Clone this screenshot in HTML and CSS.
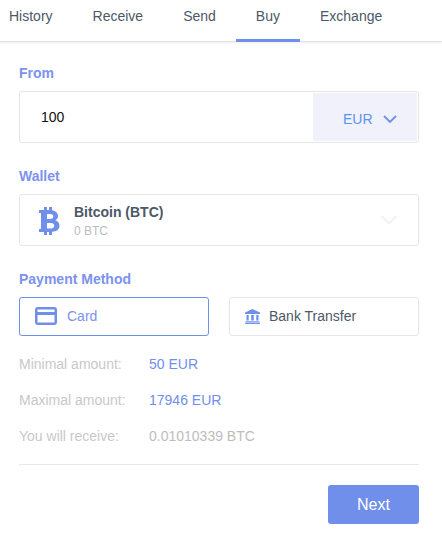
FILE: index.html
```html
<!DOCTYPE html>
<html>
  <head>
    <title>Buy</title>
    <link rel="stylesheet" href="styles.css">
  </head>
  <body>
    <div class="tabs">
      <a class="tab">History</a>
      <a class="tab">Receive</a>
      <a class="tab">Send</a>
      <a class="tab tab-active">Buy</a>
      <a class="tab">Exchange</a>
    </div>

    <div class="content">
      <p class="label">From</p>
      <div class="amount-box">
        <span class="amount">100</span>
        <div class="currency">
          <span>EUR</span>
          <svg class="chevron" width="14" height="9" viewBox="0 0 14 9"><path d="M1 1l6 6 6-6" fill="none" stroke="currentColor" stroke-width="1.8"/></svg>
        </div>
      </div>

      <p class="label label-wallet">Wallet</p>
      <div class="wallet-box">
        <svg class="btc-icon" width="22" height="30" viewBox="0 0 22 30">
          <path fill="#6f8feb" fill-rule="evenodd" d="M6 1h3v3h2V1h3v3.200c3.600.6 6 2.700 6 5.800 0 2-1 3.500-2.700 4.300C19.700 15.100 21.500 17 21.500 19.700c0 3.400-2.600 5.700-7.500 6.100V29h-3v-3H9v3H6v-3H1v-3h2V7H1V4h5V1zm3 7v5h3.500c1.700 0 2.800-1 2.800-2.500S14.200 8 12.500 8H9zm0 9v5.500h4c2 0 3.200-1.100 3.200-2.800S15 17 13 17H9z"/>
        </svg>
        <div class="wallet-text">
          <div class="wallet-name">Bitcoin (BTC)</div>
          <div class="wallet-balance">0 BTC</div>
        </div>
        <svg class="wallet-chevron" width="18" height="10" viewBox="0 0 18 10"><path d="M1.500 1 9 8.500 16.500 1" fill="none" stroke="#f0f1fa" stroke-width="1.800"/></svg>
      </div>

      <p class="label label-payment">Payment Method</p>
      <div class="methods">
        <div class="method method-active">
          <svg width="22" height="18" viewBox="0 0 22 18"><path fill="#6f8feb" fill-rule="evenodd" d="M3 0h16a3 3 0 0 1 3 3v12a3 3 0 0 1-3 3H3a3 3 0 0 1-3-3V3a3 3 0 0 1 3-3zm-.5 2.500V5h17V2.500h-17zm0 5.500v7.500h17V8h-17z"/></svg>
          <span>Card</span>
        </div>
        <div class="method method-bank">
          <svg width="15" height="15" viewBox="0 0 15 15"><path fill="#6f8feb" d="M7.500 0 15 3.600V5H0V3.600L7.500 0zM1.500 6h2.200v5.500H1.500V6zm4.700 0h2.600v5.500H6.200V6zm5.100 0h2.200v5.500h-2.200V6zM0.500 12.300h14V13.500H.5v-1.200zM0 14h15v1H0v-1z"/></svg>
          <span>Bank Transfer</span>
        </div>
      </div>

      <div class="row"><span class="row-name">Minimal amount:</span><span class="row-value">50 EUR</span></div>
      <div class="row"><span class="row-name">Maximal amount:</span><span class="row-value">17946 EUR</span></div>
      <div class="row"><span class="row-name">You will receive:</span><span class="row-value row-muted">0.01010339 BTC</span></div>

      <div class="footer">
        <button class="next">Next</button>
      </div>
    </div>
  </body>
</html>
```

FILE: styles.css
```css
body {
  margin: 0;
  background-color: white;
  font-family: "Liberation Sans", Arial, sans-serif;
  font-size: 14px;
  color: #4c5866;
  overflow: hidden;
}

.tabs {
  display: flex;
  height: 41px;
  margin-left: -11px;
  border-bottom: 1px solid #e2e2e2;
  box-shadow: 0 1px 2px #eeeeee;
}

.tab {
  padding: 0 20px;
  line-height: 32px;
}

.tab-active {
  height: 39px;
  border-bottom: 3px solid #6f8feb;
}

.content {
  padding: 0 23px 0 19px;
}

.label {
  margin: 0;
  font-size: 14px;
  line-height: 16px;
  font-weight: bold;
  color: #7c92ee;
}

.content > .label:first-child {
  padding-top: 23px;
}

.amount-box {
  display: flex;
  justify-content: space-between;
  height: 50px;
  margin-top: 10px;
  border: 1px solid #e6e6e6;
  border-radius: 3px;
}

.amount {
  padding-left: 21px;
  line-height: 51px;
  color: #111111;
}

.currency {
  display: flex;
  align-items: center;
  gap: 10px;
  width: 104px;
  margin: 1px;
  padding: 4px 0 0 30px;
  box-sizing: border-box;
  background-color: #f0f1fa;
  color: #5b93f0;
}

.chevron {
  color: #6f8feb;
}

.label-wallet {
  margin-top: 25px;
}

.wallet-box {
  display: flex;
  align-items: center;
  height: 50px;
  margin-top: 10px;
  border: 1px solid #e6e6e6;
  border-radius: 3px;
}

.btc-icon {
  margin-left: 18px;
  margin-top: 2px;
}

.wallet-text {
  margin-left: 14px;
  padding-top: 2px;
}

.wallet-name {
  font-weight: bold;
  line-height: 18px;
}

.wallet-balance {
  margin-top: 2px;
  font-size: 12px;
  line-height: 16px;
  color: #bdbdbd;
}

.wallet-chevron {
  margin-left: auto;
  margin-right: 20px;
}

.label-payment {
  margin-top: 25px;
}

.methods {
  display: flex;
  gap: 20px;
  margin-top: 10px;
  margin-bottom: 10px;
}

.method {
  display: flex;
  align-items: center;
  flex: 1;
  height: 36px;
  padding-bottom: 1px;
  border: 1px solid #e6e6e6;
  border-radius: 3px;
}

.method-active {
  border-color: #6f8feb;
  color: #7c92ee;
  padding-left: 15px;
  gap: 10px;
}

.method-bank {
  padding-left: 15px;
  gap: 9px;
}

.row {
  display: flex;
  height: 36px;
  line-height: 36px;
}

.row-name {
  width: 130px;
  color: #c8c8c8;
}

.row-value {
  color: #6f8feb;
}

.row-muted {
  color: #bdbdbd;
}

.footer {
  display: flex;
  justify-content: flex-end;
  margin-top: 10px;
  padding-top: 20px;
  border-top: 1px solid #e8e8e8;
}

.next {
  width: 91px;
  height: 39px;
  border: none;
  border-radius: 3px;
  background-color: #6f8feb;
  color: white;
  font-family: inherit;
  font-size: 16px;
}
```
